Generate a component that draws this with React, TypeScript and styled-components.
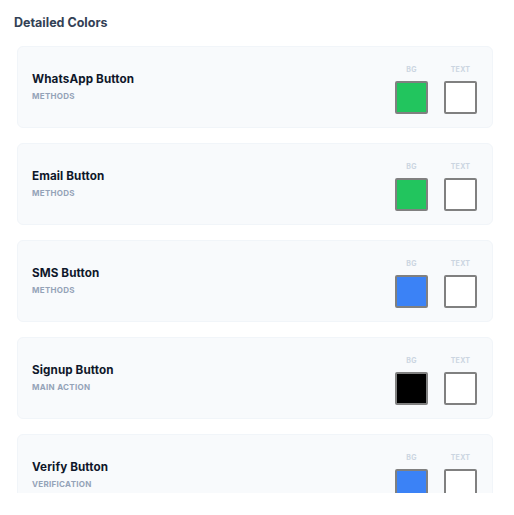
import React from "react";
import styled, { createGlobalStyle } from "styled-components";

const Global = createGlobalStyle`
  html, body { margin: 0; padding: 0; background: #ffffff; }
  body { font-family: Inter, "Noto Sans", sans-serif; -webkit-font-smoothing: antialiased; }
`;

const Page = styled.div`
  height: 493px;
  overflow: hidden;
  padding: 14px 21px 0 14px;
  box-sizing: border-box;
`;

const Heading = styled.h2`
  margin: 0;
  font-size: 12.5px;
  font-weight: 700;
  color: #334155;
  line-height: 18px;
`;

const List = styled.div`
  display: flex;
  flex-direction: column;
  gap: 15px;
  margin: 14px 0 0 3px;
`;

const Card = styled.div`
  height: 82px;
  box-sizing: border-box;
  display: flex;
  align-items: center;
  justify-content: space-between;
  padding: 0 15px 0 14px;
  background: #f8fafc;
  border: 1px solid #f1f5f9;
  border-radius: 6px;
`;

const Info = styled.div`
  display: flex;
  flex-direction: column;
  gap: 5px;
  margin-top: -2px;
`;

const Name = styled.div`
  font-size: 11.7px;
  font-weight: 700;
  color: #0f172a;
  line-height: 14px;
  letter-spacing: 0.1px;
`;

const Category = styled.div`
  font-size: 8px;
  font-weight: 700;
  color: #94a3b8;
  text-transform: uppercase;
  letter-spacing: 0.3px;
  line-height: 10px;
`;

const Swatches = styled.div`
  display: flex;
  gap: 16px;
  margin-top: 4px;
`;

const SwatchCol = styled.div`
  display: flex;
  flex-direction: column;
  align-items: center;
  gap: 7px;
`;

const SwatchLabel = styled.div`
  font-size: 7px;
  font-weight: 700;
  color: #cbd5e1;
  text-transform: uppercase;
  letter-spacing: 0.3px;
  line-height: 9px;
`;

const Swatch = styled.div<{ $color: string }>`
  width: 33px;
  height: 33px;
  box-sizing: border-box;
  border: 2px solid #808080;
  border-radius: 2px;
  background: ${(p) => p.$color};
`;

const items = [
  { name: "WhatsApp Button", cat: "Methods", bg: "#22c55e", text: "#ffffff" },
  { name: "Email Button", cat: "Methods", bg: "#22c55e", text: "#ffffff" },
  { name: "SMS Button", cat: "Methods", bg: "#3b82f6", text: "#ffffff" },
  { name: "Signup Button", cat: "Main Action", bg: "#000000", text: "#ffffff" },
  { name: "Verify Button", cat: "Verification", bg: "#3b82f6", text: "#ffffff" },
];

export default function App() {
  return (
    <>
      <Global />
      <Page>
        <Heading>Detailed Colors</Heading>
        <List>
          {items.map((it) => (
            <Card key={it.name}>
              <Info>
                <Name>{it.name}</Name>
                <Category>{it.cat}</Category>
              </Info>
              <Swatches>
                <SwatchCol>
                  <SwatchLabel>BG</SwatchLabel>
                  <Swatch $color={it.bg} />
                </SwatchCol>
                <SwatchCol>
                  <SwatchLabel>Text</SwatchLabel>
                  <Swatch $color={it.text} />
                </SwatchCol>
              </Swatches>
            </Card>
          ))}
        </List>
      </Page>
    </>
  );
}
